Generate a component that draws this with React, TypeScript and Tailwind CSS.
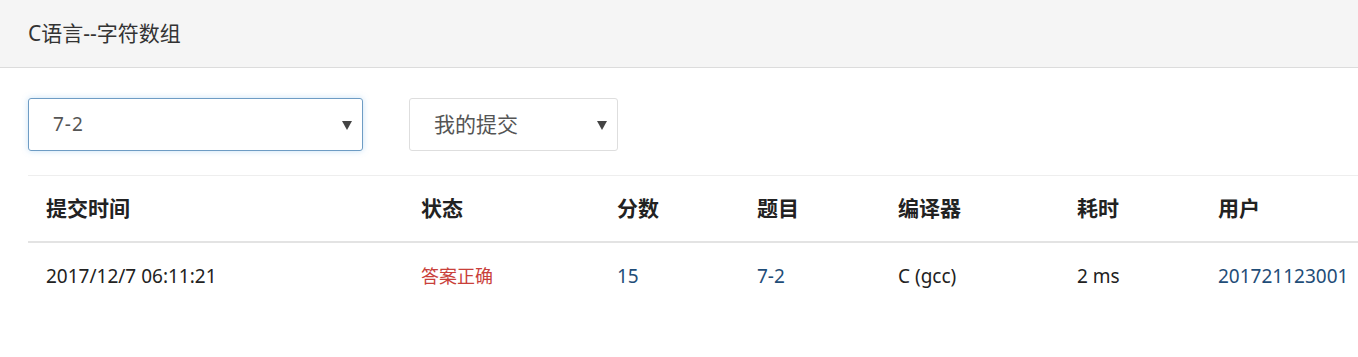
import React from "react";

const font = { fontFamily: '"Noto Sans", "Noto Sans CJK SC", sans-serif' };

function Arrow() {
  return (
    <svg width="10" height="10" viewBox="0 0 10 10" className="shrink-0">
      <polygon points="0,1 10,1 5,10" fill="#444" />
    </svg>
  );
}

const cols = [
  { w: "w-[375px]", h: "提交时间" },
  { w: "w-[196px]", h: "状态" },
  { w: "w-[140px]", h: "分数" },
  { w: "w-[141px]", h: "题目" },
  { w: "w-[179px]", h: "编译器" },
  { w: "w-[141px]", h: "耗时" },
  { w: "w-[180px]", h: "用户" },
];

export default function App() {
  return (
    <div className="w-[1358px] h-[357px] overflow-hidden bg-white text-[#333]" style={font}>
      <div className="h-[68px] bg-[#f5f5f5] border-b border-[#dcdcdc] flex items-center px-[28px]">
        <span className="text-[21px] text-[#333]">C语言--字符数组</span>
      </div>
      <div className="pl-[28px] pt-[30px]">
        <div className="flex gap-[46px]">
          <div className="w-[335px] h-[53px] border border-[#6e9cc4] rounded-[3px] shadow-[0_0_6px_rgba(102,175,233,0.35)] flex items-center justify-between pl-[24px] pr-[10px]">
            <span className="text-[19px] text-[#555] tracking-[1px]">7-2</span>
            <Arrow />
          </div>
          <div className="w-[209px] h-[53px] border border-[#dedede] rounded-[3px] flex items-center justify-between pl-[24px] pr-[10px]">
            <span className="text-[21px] text-[#555]">我的提交</span>
            <Arrow />
          </div>
        </div>
        <div className="mt-[24px] w-[1400px] border-t border-[#eeeeee]">
          <div className="flex h-[67px] items-center border-b-2 border-[#e3e3e3]">
            {cols.map((c) => (
              <div key={c.h} className={`${c.w} pl-[18px] text-[21px] font-bold text-[#222]`}>
                {c.h}
              </div>
            ))}
          </div>
          <div className="flex h-[66px] items-center text-[19px]">
            <div className="w-[375px] pl-[18px] text-[#222]">2017/12/7 06:11:21</div>
            <div className="w-[196px] pl-[18px] text-[18px] text-[#c9403a]">答案正确</div>
            <div className="w-[140px] pl-[18px] text-[#1f4d78]">15</div>
            <div className="w-[141px] pl-[18px] text-[#1f4d78]">7-2</div>
            <div className="w-[179px] pl-[18px] text-[#222]">C (gcc)</div>
            <div className="w-[141px] pl-[18px] text-[#222]">2 ms</div>
            <div className="w-[180px] pl-[18px] text-[#1f4d78]">201721123001</div>
          </div>
        </div>
      </div>
    </div>
  );
}
